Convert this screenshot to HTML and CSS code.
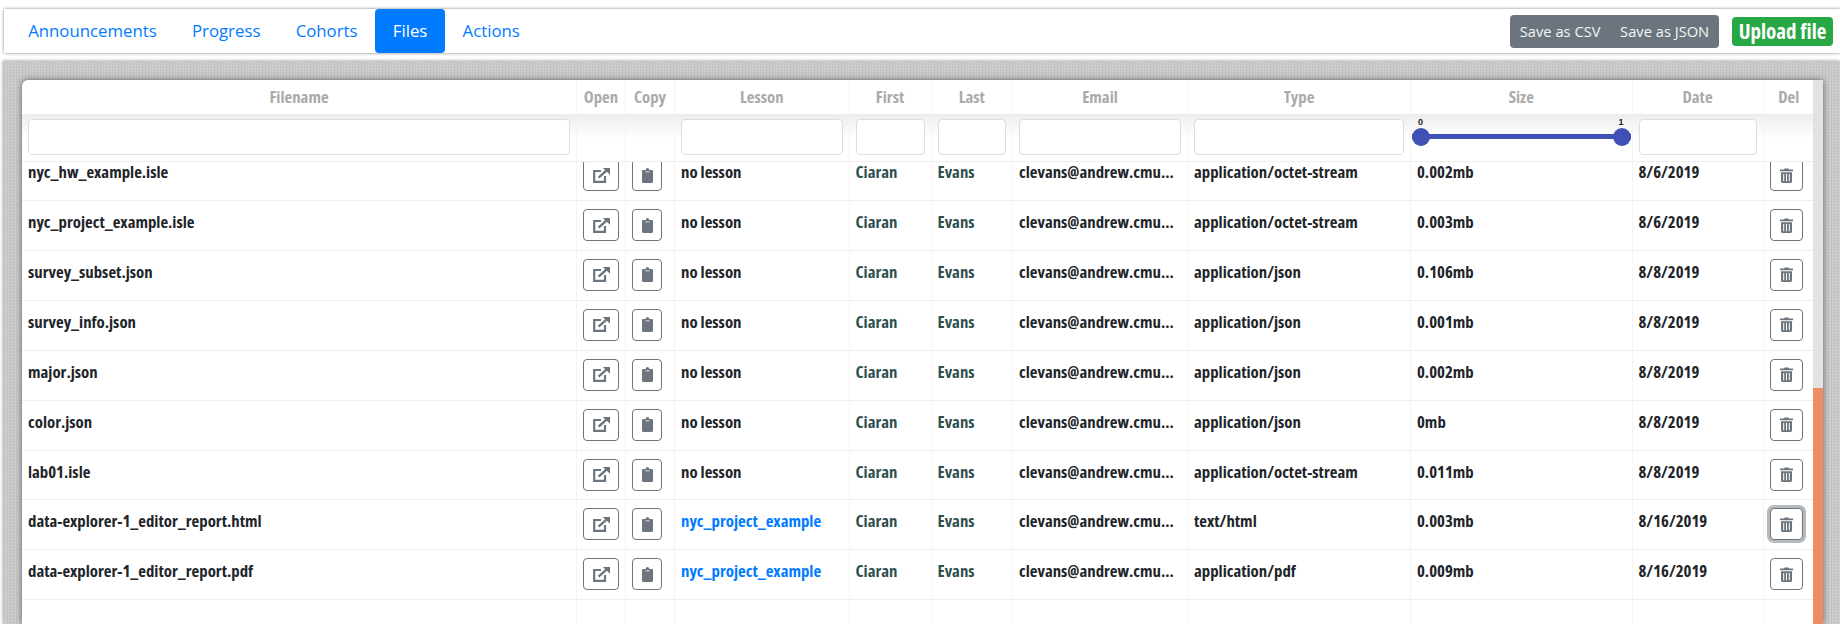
FILE: index.html
```html
<!DOCTYPE html>
<html lang="en">
<head>
  <meta charset="UTF-8">
  <title>Files</title>
  <link rel="stylesheet" href="styles.css">
</head>
<body>

  <svg class="icon-defs" width="0" height="0">
    <symbol id="icon-open" viewBox="0 0 17 15">
      <path d="M8 3H1.2V13.8H12V8" fill="none" stroke="currentColor" stroke-width="2.2"/>
      <path d="M5.6 9.6L13.4 2.6" fill="none" stroke="currentColor" stroke-width="2.4"/>
      <path d="M9.8 0H17V6.8Z" fill="currentColor"/>
    </symbol>
    <symbol id="icon-copy" viewBox="0 0 11 15">
      <path d="M1.2 2H3.6C3.9 0.7 4.6 0 5.5 0S7.1 0.7 7.4 2H9.8C10.5 2 11 2.5 11 3.2V13.8C11 14.5 10.5 15 9.8 15H1.2C0.5 15 0 14.5 0 13.8V3.2C0 2.5 0.5 2 1.2 2ZM3.4 3.4V4.2H7.6V3.4Z" fill="currentColor" fill-rule="evenodd"/>
    </symbol>
    <symbol id="icon-trash" viewBox="0 0 13 15">
      <path d="M0 1.6H4L4.6 0.4H8.4L9 1.6H13V3.2H0ZM1 4.2H12V13.6C12 14.4 11.4 15 10.6 15H2.4C1.6 15 1 14.4 1 13.6ZM3.2 6V13.2H4.2V6ZM6 6V13.2H7V6ZM8.8 6V13.2H9.8V6Z" fill="currentColor" fill-rule="evenodd"/>
    </symbol>
  </svg>

  <nav class="topbar">
    <div class="tabs">
      <a class="tab">Announcements</a>
      <a class="tab">Progress</a>
      <a class="tab">Cohorts</a>
      <a class="tab active">Files</a>
      <a class="tab">Actions</a>
    </div>
    <div class="save-group">
      <button class="save-btn">Save as CSV</button>
      <button class="save-btn">Save as JSON</button>
    </div>
    <button class="upload-btn">Upload file</button>
  </nav>

  <div id="main">
    <div class="card">
      <div class="table">
        <div class="row head">
          <div>Filename</div><div>Open</div><div>Copy</div><div>Lesson</div><div>First</div><div>Last</div><div>Email</div><div>Type</div><div>Size</div><div>Date</div><div>Del</div>
        </div>
        <div class="row filters">
          <div><input></div><div></div><div></div><div><input></div><div><input></div><div><input></div><div><input></div><div><input></div>
          <div class="range">
            <div class="range-labels"><span>0</span><span>1</span></div>
            <div class="range-track"><i class="handle"></i><i class="handle"></i></div>
          </div>
          <div><input></div><div></div>
        </div>

        <div class="rows">
          <div class="row item">
            <div>nyc_hw_example.isle</div>
            <div><button class="btn-open"><svg><use href="#icon-open"/></svg></button></div>
            <div><button class="btn-copy"><svg><use href="#icon-copy"/></svg></button></div>
            <div>no lesson</div><div class="person">Ciaran</div><div class="person">Evans</div><div>clevans@andrew.cmu...</div><div>application/octet-stream</div><div>0.002mb</div><div>8/6/2019</div>
            <div><button class="btn-del"><svg><use href="#icon-trash"/></svg></button></div>
          </div>
          <div class="row item">
            <div>nyc_project_example.isle</div>
            <div><button class="btn-open"><svg><use href="#icon-open"/></svg></button></div>
            <div><button class="btn-copy"><svg><use href="#icon-copy"/></svg></button></div>
            <div>no lesson</div><div class="person">Ciaran</div><div class="person">Evans</div><div>clevans@andrew.cmu...</div><div>application/octet-stream</div><div>0.003mb</div><div>8/6/2019</div>
            <div><button class="btn-del"><svg><use href="#icon-trash"/></svg></button></div>
          </div>
          <div class="row item">
            <div>survey_subset.json</div>
            <div><button class="btn-open"><svg><use href="#icon-open"/></svg></button></div>
            <div><button class="btn-copy"><svg><use href="#icon-copy"/></svg></button></div>
            <div>no lesson</div><div class="person">Ciaran</div><div class="person">Evans</div><div>clevans@andrew.cmu...</div><div>application/json</div><div>0.106mb</div><div>8/8/2019</div>
            <div><button class="btn-del"><svg><use href="#icon-trash"/></svg></button></div>
          </div>
          <div class="row item">
            <div>survey_info.json</div>
            <div><button class="btn-open"><svg><use href="#icon-open"/></svg></button></div>
            <div><button class="btn-copy"><svg><use href="#icon-copy"/></svg></button></div>
            <div>no lesson</div><div class="person">Ciaran</div><div class="person">Evans</div><div>clevans@andrew.cmu...</div><div>application/json</div><div>0.001mb</div><div>8/8/2019</div>
            <div><button class="btn-del"><svg><use href="#icon-trash"/></svg></button></div>
          </div>
          <div class="row item">
            <div>major.json</div>
            <div><button class="btn-open"><svg><use href="#icon-open"/></svg></button></div>
            <div><button class="btn-copy"><svg><use href="#icon-copy"/></svg></button></div>
            <div>no lesson</div><div class="person">Ciaran</div><div class="person">Evans</div><div>clevans@andrew.cmu...</div><div>application/json</div><div>0.002mb</div><div>8/8/2019</div>
            <div><button class="btn-del"><svg><use href="#icon-trash"/></svg></button></div>
          </div>
          <div class="row item">
            <div>color.json</div>
            <div><button class="btn-open"><svg><use href="#icon-open"/></svg></button></div>
            <div><button class="btn-copy"><svg><use href="#icon-copy"/></svg></button></div>
            <div>no lesson</div><div class="person">Ciaran</div><div class="person">Evans</div><div>clevans@andrew.cmu...</div><div>application/json</div><div>0mb</div><div>8/8/2019</div>
            <div><button class="btn-del"><svg><use href="#icon-trash"/></svg></button></div>
          </div>
          <div class="row item">
            <div>lab01.isle</div>
            <div><button class="btn-open"><svg><use href="#icon-open"/></svg></button></div>
            <div><button class="btn-copy"><svg><use href="#icon-copy"/></svg></button></div>
            <div>no lesson</div><div class="person">Ciaran</div><div class="person">Evans</div><div>clevans@andrew.cmu...</div><div>application/octet-stream</div><div>0.011mb</div><div>8/8/2019</div>
            <div><button class="btn-del"><svg><use href="#icon-trash"/></svg></button></div>
          </div>
          <div class="row item">
            <div>data-explorer-1_editor_report.html</div>
            <div><button class="btn-open"><svg><use href="#icon-open"/></svg></button></div>
            <div><button class="btn-copy"><svg><use href="#icon-copy"/></svg></button></div>
            <div class="lesson-link">nyc_project_example</div><div class="person">Ciaran</div><div class="person">Evans</div><div>clevans@andrew.cmu...</div><div>text/html</div><div>0.003mb</div><div>8/16/2019</div>
            <div><button class="btn-del focused"><svg><use href="#icon-trash"/></svg></button></div>
          </div>
          <div class="row item">
            <div>data-explorer-1_editor_report.pdf</div>
            <div><button class="btn-open"><svg><use href="#icon-open"/></svg></button></div>
            <div><button class="btn-copy"><svg><use href="#icon-copy"/></svg></button></div>
            <div class="lesson-link">nyc_project_example</div><div class="person">Ciaran</div><div class="person">Evans</div><div>clevans@andrew.cmu...</div><div>application/pdf</div><div>0.009mb</div><div>8/16/2019</div>
            <div><button class="btn-del"><svg><use href="#icon-trash"/></svg></button></div>
          </div>
          <div class="row filler">
            <div></div><div></div><div></div><div></div><div></div><div></div><div></div><div></div><div></div><div></div><div></div>
          </div>
        </div>
      </div>
      <div class="scrollbar"><div class="thumb"></div></div>
    </div>
  </div>

</body>
</html>
```

FILE: styles.css
```css
html, body {
  height: 100%;
}

html {
  font-size: 16.8px;
}

body {
  margin: 0;
  padding: 9px 0 0 0;
  box-sizing: border-box;
  height: 624px;
  overflow: hidden;
  display: flex;
  flex-direction: column;
  background-color: #fff;
  font-family: 'Open Sans', sans-serif;
  color: #212529;
}

.icon-defs {
  position: absolute;
}

/* top bar */
.topbar {
  display: flex;
  align-items: center;
  height: 44px;
  margin-left: 4px;
  padding-right: 7px;
  box-shadow: 0 0 3px rgba(60, 80, 70, 0.7);
}

.tabs {
  display: flex;
  flex: 1;
  align-self: stretch;
  margin-left: 6.5px;
}

.tab {
  display: flex;
  align-items: center;
  padding: 0 1.05rem 2px 1.05rem;
  font-size: 1rem;
  color: #007bff;
  border-radius: 4px;
}

.tab.active {
  background-color: #007bff;
  color: #fff;
}

.save-group {
  display: flex;
  height: 33px;
  width: 209px;
  margin-right: 13px;
  border-radius: 4px;
  background-color: #6c757d;
}

.save-btn {
  flex: auto;
  padding: 0;
  border: none;
  background: none;
  color: #f4f5f6;
  font-family: 'Open Sans', sans-serif;
  font-size: 0.875rem;
}

.upload-btn {
  width: 101px;
  height: 29px;
  padding: 0;
  border: none;
  border-radius: 4px;
  background-color: #28a745;
  color: #fff;
  font-family: 'Open Sans', sans-serif;
  font-stretch: 75%;
  font-weight: 700;
  font-size: 1.25rem;
}

/* textured panel */
#main {
  flex: 1;
  min-height: 0;
  display: flex;
  margin: 8px 0 0 3px;
  padding: 19px 17px 0 19px;
  background-color: #c9c9c9;
  background-image: repeating-conic-gradient(#c2c2c2 0 25%, #d0d0d0 0 50%);
  background-size: 3px 3px;
  box-shadow: 0 0 3px rgba(60, 80, 70, 0.6);
}

.card {
  flex: 1;
  display: flex;
  background-color: #fff;
  border-radius: 6px 0 0 0;
  box-shadow: 0 0 6px rgba(0, 0, 0, 0.55);
  overflow: hidden;
}

.table {
  width: 1791px;
  display: flex;
  flex-direction: column;
  font-stretch: 75%;
  font-weight: 700;
  font-size: 1rem;
}

.row {
  display: grid;
  grid-template-columns: 555px 49px 49px 174.5px 82px 81.5px 175px 223px 221.5px 131px 50.5px;
}

.row > div {
  box-sizing: border-box;
  min-width: 0;
  padding: 0 6px;
  border-right: 1px solid #f4f4f4;
  white-space: nowrap;
  overflow: hidden;
}

.row > div:last-child {
  border-right: none;
}

.head {
  height: 34px;
  position: relative;
  z-index: 2;
}

.head > div {
  text-align: center;
  line-height: 33px;
  color: #aaa;
}

/* filters sit over the top edge of the scrolled rows */
.filters {
  height: 48px;
  margin-bottom: -4px;
  position: relative;
  z-index: 1;
  background-color: #fff;
  background-image: linear-gradient(#ececec, #fff 24px);
  border-bottom: 1px solid #eee;
  box-sizing: border-box;
}

.filters > div {
  padding-top: 5px;
}

.filters input {
  display: block;
  box-sizing: border-box;
  width: 100%;
  height: 36px;
  border: 1px solid #ddd;
  border-radius: 4px;
  background-color: #fff;
}

.filters .range {
  padding: 4px 0 0 0;
  overflow: visible;
}

.range-labels {
  display: flex;
  justify-content: space-between;
  padding: 0 8px 0 7px;
  font-family: 'Liberation Sans', sans-serif;
  font-stretch: normal;
  font-size: 9px;
  line-height: 9px;
  color: #222;
}

.range-track {
  display: flex;
  justify-content: space-between;
  align-items: center;
  height: 5px;
  margin: 7px 1px 0 1px;
  background-color: #3f51b5;
}

.handle {
  width: 18px;
  height: 18px;
  border-radius: 50%;
  background-color: #3f51b5;
}

/* table body, the first row is scrolled partly under the filters */
.rows {
  flex: 1;
  min-height: 0;
  display: flex;
  flex-direction: column;
  overflow: hidden;
}

.item {
  flex: none;
  height: 49.9px;
  box-sizing: border-box;
  border-bottom: 1px solid #eee;
  line-height: 22px;
}

.item > div {
  padding-top: 10px;
}

.rows .item:first-child {
  height: 43.1px;
}

.rows .item:first-child > div {
  padding-top: 3px;
}

.rows .item:first-child button {
  margin-top: -2px;
}

.filler {
  flex: 1;
}

.person {
  color: #2f4f4f;
}

.lesson-link {
  color: #007bff;
}

.item > div:nth-child(2),
.item > div:nth-child(3),
.item > div:nth-child(11) {
  padding-top: 8px;
  overflow: visible;
}

.item button {
  display: flex;
  align-items: center;
  justify-content: center;
  height: 32px;
  padding: 0;
  border: 1px solid #6c757d;
  border-radius: 4px;
  background: #fff;
  color: #6c757d;
}

.btn-open {
  width: 36px;
}

.btn-copy {
  width: 30px;
}

.btn-del {
  width: 33px;
}

.btn-open svg {
  width: 17px;
  height: 15px;
}

.btn-copy svg {
  width: 11px;
  height: 15px;
}

.btn-del svg {
  width: 13px;
  height: 15px;
}

.item button.focused {
  box-shadow: 0 0 0 3px rgba(108, 117, 125, 0.5);
}

.scrollbar {
  width: 10px;
  padding-top: 308px;
  display: flex;
  background-color: #e2e2e2;
}

.thumb {
  flex: 1;
  background-color: #f08c64;
}
```
